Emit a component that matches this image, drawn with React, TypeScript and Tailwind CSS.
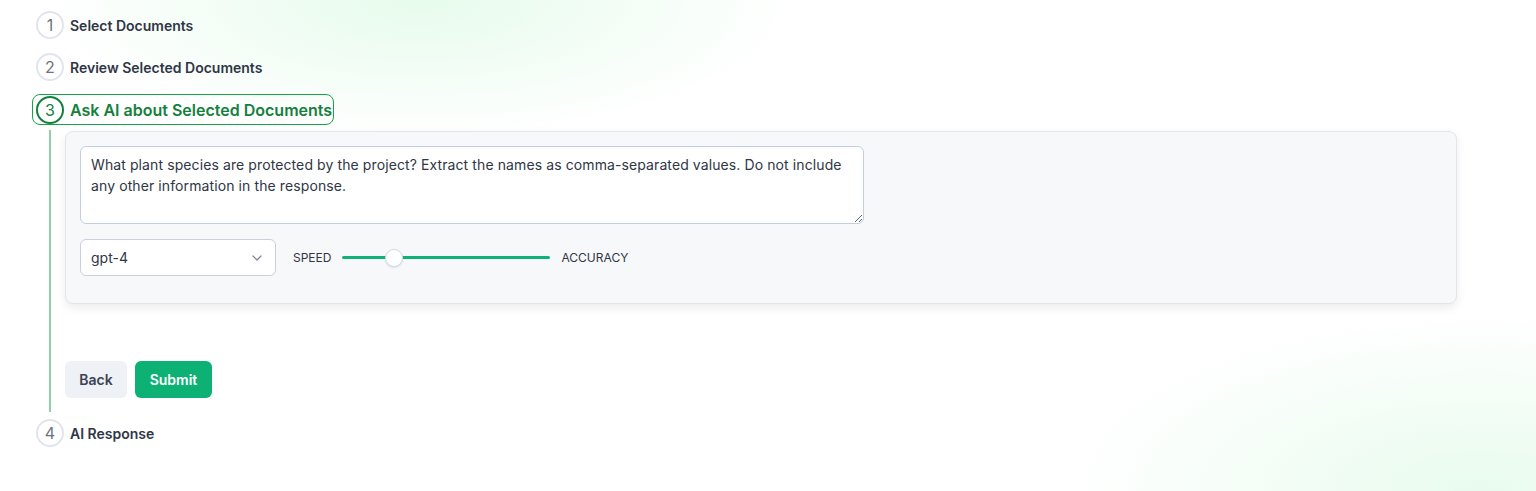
import React from "react";

function Circle({ n, active }: { n: number; active?: boolean }) {
  return (
    <div
      className={
        active
          ? "flex h-[28px] w-[28px] shrink-0 items-center justify-center rounded-full border-2 border-[#15803d] text-[16px] text-[#15803d]"
          : "flex h-[28px] w-[28px] shrink-0 items-center justify-center rounded-full border-2 border-[#e2e5ee] text-[16px] text-[#6b7280]"
      }
    >
      {n}
    </div>
  );
}

export default function App() {
  return (
    <div
      className="relative h-[491px] w-full overflow-hidden bg-white text-[#2f3645] bg-[radial-gradient(ellipse_380px_140px_at_420px_0px,rgba(220,250,228,0.7),rgba(255,255,255,0)),radial-gradient(ellipse_420px_180px_at_1480px_491px,rgba(225,250,232,0.75),rgba(255,255,255,0))]"
      style={{ fontFamily: "Inter, 'Noto Sans', sans-serif" }}
    >
      <div className="flex flex-col pl-[36px] pt-[11px]">
        <div className="flex h-[28px] items-center gap-[6px]">
          <Circle n={1} />
          <span className="text-[14px] font-semibold">Select Documents</span>
        </div>
        <div className="mt-[14px] flex h-[28px] items-center gap-[6px]">
          <Circle n={2} />
          <span className="text-[14px] font-semibold">Review Selected Documents</span>
        </div>
        <div className="ml-[-4px] mt-[13px] flex h-[31px] w-[302px] items-center gap-[6px] rounded-[8px] border border-[#16a34a] pl-[3px]">
          <Circle n={3} active />
          <span className="text-[16px] font-semibold text-[#15803d]">Ask AI about Selected Documents</span>
        </div>
        <div className="flex">
          <div className="ml-[12.5px] mt-[5px] w-[2px] bg-[#8fd1a6]" />
          <div className="ml-[14.5px] flex flex-col pb-[14px] pt-[6px]">
            <div className="flex h-[173px] w-[1392px] flex-col gap-[15px] rounded-[8px] border border-[#e2e5ec] bg-[#f7f8fa] px-[14px] pt-[14px] shadow-[0_4px_10px_rgba(0,0,0,0.08)]">
              <textarea
                className="h-[78px] w-[784px] resize-y rounded-[6px] border border-[#c5cde0] bg-white px-[10px] py-[7px] text-[14px] leading-[21px] tracking-[0.1px] text-[#2f3645] outline-none"
                defaultValue="What plant species are protected by the project? Extract the names as comma-separated values. Do not include any other information in the response."
              />
              <div className="flex items-center">
                <div className="flex h-[37px] w-[196px] items-center justify-between rounded-[6px] border border-[#c9cfdc] bg-white pl-[10px] pr-[10px]">
                  <span className="text-[14px] text-[#2f3645]">gpt-4</span>
                  <svg width="16" height="16" viewBox="0 0 24 24" fill="none" stroke="#7b8494" strokeWidth="1.8" strokeLinecap="round" strokeLinejoin="round">
                    <path d="M6 9l6 6 6-6" />
                  </svg>
                </div>
                <span className="ml-[17px] text-[12px] text-[#2f3645]">SPEED</span>
                <div className="relative ml-[11px] flex h-[20px] w-[208px] items-center">
                  <div className="h-[3px] w-full rounded-full bg-[#0fb377]" />
                  <div className="absolute left-[43px] top-[1px] h-[18px] w-[18px] rounded-full border border-[#d3d8e2] bg-white shadow-[0_1px_2px_rgba(0,0,0,0.1)]" />
                </div>
                <span className="ml-[11px] text-[12px] text-[#2f3645]">ACCURACY</span>
              </div>
            </div>
            <div className="mt-[57px] flex gap-[8px]">
              <button className="h-[37px] w-[62px] rounded-[6px] bg-[#eef1f6] text-[14px] font-semibold text-[#3b4252]">Back</button>
              <button className="h-[37px] w-[77px] rounded-[6px] bg-[#0db174] text-[14px] font-semibold text-white">Submit</button>
            </div>
          </div>
        </div>
        <div className="mt-[7px] flex h-[28px] items-center gap-[6px]">
          <Circle n={4} />
          <span className="text-[14px] font-semibold">AI Response</span>
        </div>
      </div>
    </div>
  );
}
